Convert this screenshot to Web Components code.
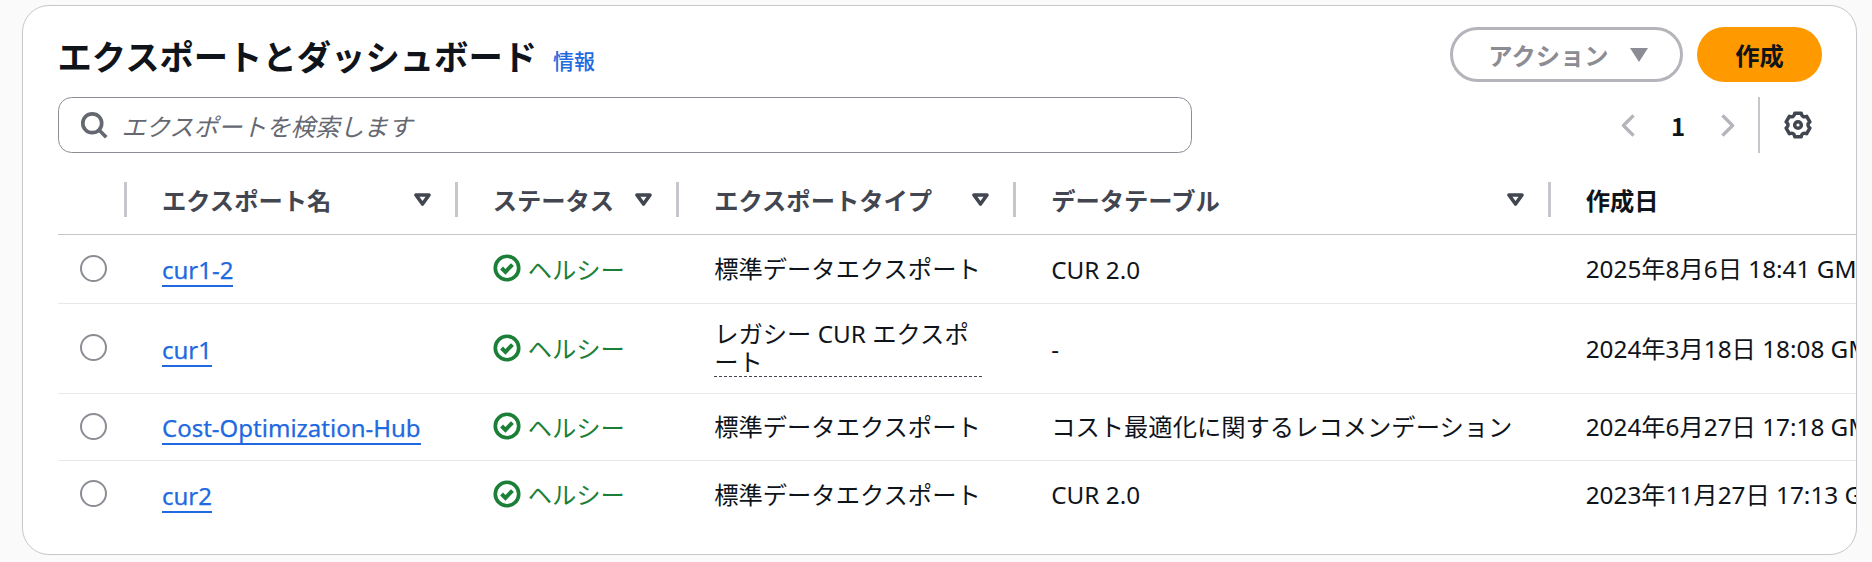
<!DOCTYPE html>
<html lang="ja"><head><meta charset="utf-8">
<style>
html,body{margin:0;padding:0;background:#fafafa;height:562px;overflow:hidden}
body{font-family:"Noto Sans","Noto Sans CJK JP",sans-serif;font-size:24.3px;color:#0f141a;padding:5px 15px 0 22px;box-sizing:border-box;--cols:69.5px 330.7px 221.5px 337px 534.5px 1fr}
</style></head><body>
<template id="t-card"><style>
:host{display:block;box-sizing:border-box;height:550px;background:#fff;border:1.7px solid #c6c6cd;border-radius:27px;overflow:hidden;padding:21px 0 0 34.5px}
.top{display:flex;align-items:center;height:55px;padding-right:34px;gap:14px}
h1{margin:3px 0 0;font-size:34.35px;line-height:55px;font-weight:700;white-space:nowrap}
.info{font-size:21px;font-weight:500;color:#1f6ae0;margin:11px 0 0 2px}
.sp{flex:1}
.bar{display:flex;align-items:stretch;margin-top:15px;height:56px;padding-right:33.5px}
.table{margin-top:29px}
.after{flex:1}
.pg{display:flex;align-items:center}
.chev{width:27px;height:27px;display:block}
.num{font-family:"Noto Sans CJK JP",sans-serif;font-weight:700;width:71.5px;text-align:center;font-size:24px}
.div{width:1.7px;background:#c6c6cd;margin:0 24px 0 17px;align-self:stretch}
.gear{width:28px;height:28px;display:block;margin-right:11px}
</style>
<div class="top"><h1>エクスポートとダッシュボード</h1><span class="info">情報</span><span class="sp"></span><x-button variant="normal" caret disabled>アクション</x-button><x-button variant="primary">作成</x-button></div>
<div class="bar"><x-search placeholder="エクスポートを検索します"></x-search><span class="after"></span>
<div class="pg">
<svg class="chev" viewBox="0 0 16 16" fill="none" stroke="#b4b4bb" stroke-width="2" stroke-linejoin="round"><path d="M11 2 5 8l6 6"/></svg>
<span class="num">1</span>
<svg class="chev" viewBox="0 0 16 16" fill="none" stroke="#b4b4bb" stroke-width="2" stroke-linejoin="round"><path d="m5 2 6 6-6 6"/></svg>
<span class="div"></span>
<svg class="gear" viewBox="0 0 16 16" fill="none" stroke="#424650" stroke-width="2" stroke-linejoin="round"><path id="gp"/><circle cx="8" cy="8" r="1.9"/></svg>
</div></div>
<div class="table"><slot></slot></div>
</template>

<template id="t-button"><style>
:host{display:inline-flex;align-items:center;justify-content:center;box-sizing:border-box;height:55px;border-radius:28px;font-weight:700;font-size:24.3px;white-space:nowrap}
:host([variant=normal]){width:233px;border:3.4px solid #b4b4bb;color:#8c8c94;background:#fff;gap:21px;padding-left:3px}
:host([variant=primary]){width:125px;background:#f90;color:#0f141a}
svg{width:18px;height:14px;display:block}
</style><slot></slot><svg part="c" viewBox="0 0 18 14"><path d="M0 0h18L9 14z" fill="#8c8c94"/></svg></template>

<template id="t-search"><style>
:host{display:flex;align-items:center;box-sizing:border-box;width:1134px;height:56px;border:1.7px solid #8c8c94;border-radius:13.6px;background:#fff;padding-left:21px;gap:14px}
svg{width:28px;height:28px;display:block;flex:none}
span{font-style:italic;color:#656871;font-size:24.3px}
</style><svg viewBox="0 0 16 16" fill="none" stroke="#656871" stroke-width="2.1"><circle cx="7" cy="7" r="5.4"/><path d="m15 15-4.4-4.4"/></svg><span></span></template>

<template id="t-head"><style>
:host{display:grid;grid-template-columns:var(--cols);height:52px;align-items:stretch;border-bottom:1.7px solid #c6c6cd;box-sizing:content-box}
</style><slot></slot></template>

<template id="t-hcell"><style>
:host{display:flex;align-items:center;height:35px;padding-left:35px;padding-right:24px;box-sizing:border-box;border-right:3.4px solid #c6c6cd;font-weight:600;color:#424650;font-size:24.3px;white-space:nowrap;overflow:hidden}
:host([first]){padding:0}
:host([last]){border-right:0;color:#0f141a}
.s{flex:1}
svg{width:17px;height:13px;display:block;flex:none}
</style><slot></slot><span class="s"></span><svg viewBox="0 0 17 13" fill="none" stroke="#424650" stroke-width="3.6" stroke-linejoin="round"><path d="M2 2h13L8.5 11z"/></svg></template>

<template id="t-row"><style>
:host{display:grid;grid-template-columns:var(--cols);align-items:center;box-sizing:border-box;border-bottom:1.7px solid #e8e8ec}
:host([last]){border-bottom:0}
</style><slot></slot></template>

<template id="t-cell"><style>
:host{display:block;min-width:0;padding-left:35px;white-space:nowrap;box-sizing:border-box}
:host([up]){margin-top:-3px}
:host([wrap]){white-space:normal;padding-right:55px;line-height:28px}
</style><slot></slot></template>

<template id="t-radio"><style>
:host{display:block;box-sizing:border-box;width:27px;height:27px;border:2.2px solid #8c8c94;border-radius:50%;margin-left:22px;margin-top:-2px}
</style></template>

<template id="t-link"><style>
:host{display:inline-block;color:#1f6ae0;font-weight:400;font-size:24px;border-bottom:2.4px solid #1f6ae0;line-height:31px;padding-top:3px;-webkit-text-stroke:.25px #1f6ae0}
</style><slot></slot></template>

<template id="t-status"><style>
:host{display:flex;align-items:center;gap:7px;color:#1b7f37;margin-top:-2px}
svg{width:28px;height:28px;display:block;flex:none}
</style><svg viewBox="0 0 16 16" fill="none" stroke="#1b7f37" stroke-width="2.1"><circle cx="8" cy="8" r="6.7"/><path d="m4.9 8 2.2 2.2 4-4.1" stroke-width="2.3"/></svg><slot></slot></template>

<template id="t-legacy"><style>
:host{display:block;border-bottom:1.4px dashed #424650;width:268px;box-sizing:border-box}
</style><slot></slot></template>

<x-card>
<x-head>
<x-hcell first></x-hcell>
<x-hcell>エクスポート名</x-hcell>
<x-hcell>ステータス</x-hcell>
<x-hcell>エクスポートタイプ</x-hcell>
<x-hcell>データテーブル</x-hcell>
<x-hcell last>作成日</x-hcell>
</x-head>
<x-row style="height:69px"><x-radio></x-radio><x-cell><x-link>cur1-2</x-link></x-cell><x-cell><x-status>ヘルシー</x-status></x-cell><x-cell up>標準データエクスポート</x-cell><x-cell>CUR 2.0</x-cell><x-cell up>2025年8月6日 18:41 GMT+9</x-cell></x-row>
<x-row style="height:90px"><x-radio></x-radio><x-cell><x-link>cur1</x-link></x-cell><x-cell><x-status>ヘルシー</x-status></x-cell><x-cell wrap><x-legacy>レガシー CUR エクスポート</x-legacy></x-cell><x-cell>-</x-cell><x-cell up>2024年3月18日 18:08 GMT+9</x-cell></x-row>
<x-row style="height:67px"><x-radio></x-radio><x-cell><x-link>Cost-Optimization-Hub</x-link></x-cell><x-cell><x-status>ヘルシー</x-status></x-cell><x-cell up>標準データエクスポート</x-cell><x-cell up>コスト最適化に関するレコメンデーション</x-cell><x-cell up>2024年6月27日 17:18 GMT+9</x-cell></x-row>
<x-row style="height:67px" last><x-radio></x-radio><x-cell><x-link>cur2</x-link></x-cell><x-cell><x-status>ヘルシー</x-status></x-cell><x-cell up>標準データエクスポート</x-cell><x-cell>CUR 2.0</x-cell><x-cell up>2023年11月27日 17:13 GMT+9</x-cell></x-row>
</x-card>
<script>
function gearPath(){
  let d='';
  const P=(deg,R)=>{const a=deg*Math.PI/180;return (8+R*Math.cos(a)).toFixed(2)+' '+(8+R*Math.sin(a)).toFixed(2)};
  for(let k=0;k<6;k++){
    const a=k*60-90;
    d+=(k?'L':'M')+P(a-15,7)+'L'+P(a+15,7)+'Q'+P(a+30,4.6)+' '+P(a+45,7);
  }
  return d+'Z';
}
const names={card:'t-card',button:'t-button',search:'t-search',head:'t-head',hcell:'t-hcell',row:'t-row',cell:'t-cell',radio:'t-radio',link:'t-link',status:'t-status',legacy:'t-legacy'};
for(const [n,id] of Object.entries(names)){
  customElements.define('x-'+n,class extends HTMLElement{
    constructor(){super();const r=this.attachShadow({mode:'open'});r.appendChild(document.getElementById(id).content.cloneNode(true));}
    connectedCallback(){
      const r=this.shadowRoot;
      if(n==='card'){r.getElementById('gp').setAttribute('d',gearPath());}
      if(n==='button'&&!this.hasAttribute('caret')){const c=r.querySelector('svg');if(c)c.remove();}
      if(n==='search'){r.querySelector('span').textContent=this.getAttribute('placeholder');}
      if(n==='hcell'&&(this.hasAttribute('first')||this.hasAttribute('last'))){const c=r.querySelector('svg');if(c)c.remove();}
    }
  });
}
</script>
</body></html>
